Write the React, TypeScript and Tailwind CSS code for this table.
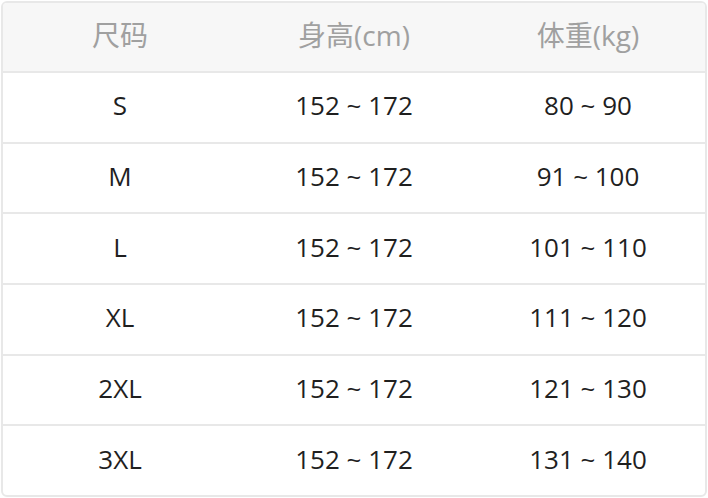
const rows = [
  { size: 'S', height: '152 ~ 172', weight: '80 ~ 90' },
  { size: 'M', height: '152 ~ 172', weight: '91 ~ 100' },
  { size: 'L', height: '152 ~ 172', weight: '101 ~ 110' },
  { size: 'XL', height: '152 ~ 172', weight: '111 ~ 120' },
  { size: '2XL', height: '152 ~ 172', weight: '121 ~ 130' },
  { size: '3XL', height: '152 ~ 172', weight: '131 ~ 140' },
];

export default function App() {
  return (
    <div
      className="w-[708px] h-[498px] bg-white p-[1px]"
      style={{ fontFamily: '"Open Sans", "Noto Sans CJK SC", sans-serif' }}
    >
      <div className="h-full border-2 border-[#e8e8e8] rounded-[6px] overflow-hidden flex flex-col">
        {/* Header */}
        <div className="grid grid-cols-3 h-[68px] pb-[4px] bg-[#f7f7f7] text-[#a0a0a0] text-[28px] items-center text-center">
          <div>尺码</div>
          <div>身高(cm)</div>
          <div>体重(kg)</div>
        </div>
        {rows.map((r) => (
          <div
            key={r.size}
            className="grid grid-cols-3 flex-1 pb-[3px] border-t-2 border-[#e8e8e8] text-[#1f1f1f] text-[26px] items-center text-center"
          >
            <div>{r.size}</div>
            <div>{r.height}</div>
            <div>{r.weight}</div>
          </div>
        ))}
      </div>
    </div>
  );
}
